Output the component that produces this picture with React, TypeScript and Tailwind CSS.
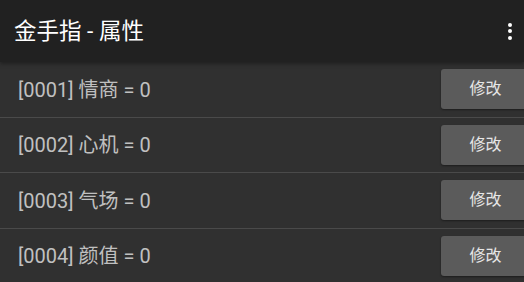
import React from 'react';

const items = [
  { id: '0001', name: '情商', value: 0 },
  { id: '0002', name: '心机', value: 0 },
  { id: '0003', name: '气场', value: 0 },
  { id: '0004', name: '颜值', value: 0 },
];

const font = { fontFamily: 'Roboto, "Noto Sans CJK SC", sans-serif' };

export default function App() {
  return (
    <div className="w-[524px] h-[282px] overflow-hidden bg-[#303030]" style={font}>
      <div className="h-[62px] bg-[#212121] flex items-center justify-between pl-[14px] pr-[10px] shadow-[0_2px_4px_rgba(0,0,0,0.35)] relative z-10">
        <h1 className="text-[22.5px] text-white leading-none mt-[1px]">金手指 - 属性</h1>
        <div className="flex flex-col gap-[2.5px] items-center w-[8px]">
          <span className="w-[4px] h-[4px] rounded-full bg-white" />
          <span className="w-[4px] h-[4px] rounded-full bg-white" />
          <span className="w-[4px] h-[4px] rounded-full bg-white" />
        </div>
      </div>

      <div>
        {items.map((item) => (
          <div
            key={item.id}
            className="h-[55.5px] flex items-center justify-between pl-[18px] border-b-[1.5px] border-[#4a4a4a]"
          >
            <span className="text-[20px] text-[#c0c0c0] leading-none mt-[1px]">
              [{item.id}] {item.name} = {item.value}
            </span>
            <button className="w-[89px] h-[40px] mr-[-6px] rounded-[3px] bg-[#5b5b5b] text-[16px] text-[#e6e6e6] shadow-[0_1px_2px_rgba(0,0,0,0.4)]">
              修改
            </button>
          </div>
        ))}
      </div>
    </div>
  );
}
